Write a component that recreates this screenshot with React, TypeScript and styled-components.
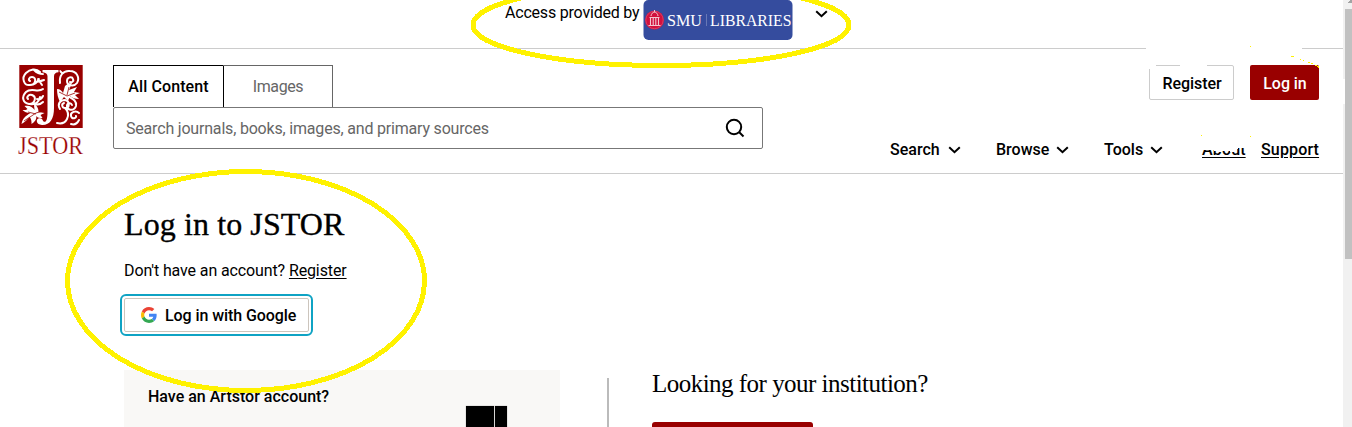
import React from "react";
import styled, { createGlobalStyle, css } from "styled-components";

const Global = createGlobalStyle`
  * { box-sizing: border-box; }
  html, body { margin: 0; height: 100%; overflow: hidden; background: #fff; }
  body { font-family: Roboto, "Liberation Sans", sans-serif; font-size: 16px; color: #000; }
  h1, h2, h3, p { margin: 0; font-weight: 400; }
  svg { display: block; flex: none; }
`;

const Window = styled.div`
  position: relative;
  display: flex;
  width: 1352px;
  height: 427px;
  overflow: hidden;
`;
const Page = styled.div`
  width: 1343px;
  flex: none;
`;
const AccessBar = styled.div`
  display: flex;
  align-items: flex-start;
  height: 49px;
  padding-left: 505px;
  border-bottom: 1px solid #ccc;
`;
const AccessText = styled.span`
  width: 138px;
  line-height: 26px;
  white-space: nowrap;
  letter-spacing: -0.2px;
`;
const Header = styled.header`
  display: flex;
  height: 125px;
  padding: 16px 24px 0 18px;
  border-bottom: 1px solid #ccc;
`;
const LogoColumn = styled.div`
  width: 95px;
  flex: none;
`;
const SearchColumn = styled.div`
  width: 650px;
  flex: none;
`;
const Tabs = styled.div`
  display: flex;
  height: 42px;
`;
const Tab = styled.div<{ $active?: boolean }>`
  width: 110px;
  line-height: 42px;
  text-align: center;
  border: 1px solid #666;
  border-width: 1px 1px 0 0;
  color: #666;
  letter-spacing: -0.4px;
  text-indent: 1px;
  ${(p) =>
    p.$active &&
    css`
      border-color: #000;
      border-left-width: 1px;
      width: 111px;
      margin-right: -1px;
      color: #000;
      font-weight: 500;
      letter-spacing: 0.09px;
      text-indent: 0;
    `}
`;
const SearchBox = styled.div`
  display: flex;
  align-items: center;
  justify-content: space-between;
  height: 42px;
  padding: 0 17px 0 12px;
  border: 1px solid #777;
  border-radius: 2px;
  color: #666;
  letter-spacing: -0.19px;
`;
const Side = styled.div`
  flex: 1;
  display: flex;
  flex-direction: column;
  align-items: flex-end;
  justify-content: space-between;
  height: 95px;
`;
const Buttons = styled.div`
  display: flex;
  gap: 16px;
`;
const Button = styled.div<{ $primary?: boolean }>`
  width: ${(p) => (p.$primary ? 69 : 85)}px;
  height: 35px;
  padding-left: 1px;
  line-height: ${(p) => (p.$primary ? 37 : 35)}px;
  text-align: center;
  font-weight: 500;
  letter-spacing: -0.05px;
  border-radius: 2px;
  border: ${(p) => (p.$primary ? "0" : "1px solid #ccc")};
  background: ${(p) => (p.$primary ? "#900" : "#fff")};
  color: ${(p) => (p.$primary ? "#fff" : "#000")};
`;
const Nav = styled.nav`
  display: flex;
  font-weight: 500;
  line-height: 20px;
`;
const NavItem = styled.span<{ $width: number; $textWidth: number }>`
  display: flex;
  align-items: center;
  width: ${(p) => p.$width}px;
  & > span {
    width: ${(p) => p.$textWidth}px;
  }
`;
const NavLink = styled.span<{ $width: number }>`
  width: ${(p) => p.$width}px;
  letter-spacing: 0.15px;
  text-decoration: underline;
  text-underline-offset: 2px;
`;
const Main = styled.main`
  padding: 30px 0 0 124px;
`;
const Title = styled.h1`
  font-family: "Liberation Serif", serif;
  font-size: 32px;
  line-height: 40px;
  letter-spacing: 0.1px;
  -webkit-text-stroke: 0.35px #000;
`;
const Account = styled.p`
  margin-top: 17px;
  line-height: 20px;
  letter-spacing: -0.12px;
  a { text-decoration: underline; text-underline-offset: 2px; }
`;
const GoogleButton = styled.div`
  display: flex;
  align-items: center;
  gap: 8px;
  width: 185px;
  height: 34px;
  margin-top: 17px;
  padding-left: 16px;
  border: 1px solid #ccc5bd;
  border-radius: 2px;
  outline: 2px solid #0fa3c4;
  outline-offset: 2px;
  font-weight: 500;
  letter-spacing: -0.08px;
`;
const Columns = styled.div`
  display: flex;
  align-items: flex-start;
  margin-top: 38px;
`;
const ArtstorCard = styled.section`
  display: flex;
  justify-content: space-between;
  width: 436px;
  height: 57px;
  padding: 0 53px 0 24px;
  background: #f9f8f6;
`;
const CardTitle = styled.h3`
  font-size: 16px;
  font-weight: 500;
  line-height: 20px;
  padding-top: 17px;
`;
const ArtstorMark = styled.div`
  display: flex;
  gap: 1px;
  padding-top: 36px;
`;
const MarkBlock = styled.i<{ $width: number }>`
  width: ${(p) => p.$width}px;
  background: #000;
  box-shadow: 0 0 1px #888;
`;
const Separator = styled.div`
  width: 2px;
  height: 49px;
  margin: 8px 43px 0 47px;
  background: #bbb;
`;
const Institution = styled.section`
  height: 57px;
`;
const InstitutionTitle = styled.h2`
  height: 52px;
  font-family: "Liberation Serif", serif;
  font-size: 25px;
  line-height: 28px;
  letter-spacing: -0.52px;
`;
const InstitutionButton = styled.div`
  width: 161px;
  height: 20px;
  border-radius: 3px;
  background: #900;
`;
const Scrollbar = styled.div`
  width: 9px;
  padding: 9px 0 0 2px;
  background: #f1f1f1;
`;
const Thumb = styled.div`
  height: 250px;
  background: #c1c1c1;
`;
const Annotations = styled.svg`
  position: absolute;
  inset: 0;
`;

const Chevron = () => (
  <svg width="13" height="8" viewBox="0 0 13 8" fill="none" stroke="#000" strokeWidth="2">
    <path d="M1.2 1.2 6.5 6.2l5.3-5" />
  </svg>
);

const SmuLogo = () => (
  <svg width="150" height="40" viewBox="0 0 150 40">
    <rect x=".5" width="149" height="40" rx="5" fill="#354c9e" />
    <circle cx="11.500" cy="20" r="9.500" fill="#d2103e" />
    <circle cx="11.500" cy="20" r="8.700" fill="none" stroke="#e26a85" strokeWidth=".5" />
    <g stroke="#f3c6d0" fill="none">
      <path d="M6.500 17.500h10M5.500 25.500h12" />
      <path d="M7.500 18v7M10.200 18v7M12.800 18v7M15.500 18v7" strokeWidth="1.100" />
      <path d="M8 16c.5-5 6.500-5 7 0M11.500 12v-2" />
    </g>
    <g fill="#fff" fontFamily="Liberation Serif, serif" fontSize="17.500">
      <text x="24" y="25.800" textLength="35" lengthAdjust="spacingAndGlyphs">SMU</text>
      <text x="67" y="25.800" textLength="81.500" lengthAdjust="spacingAndGlyphs">LIBRARIES</text>
    </g>
    <path d="M63.500 14v12" stroke="#7c8bc2" strokeWidth=".7" />
  </svg>
);

const JstorLogo = () => (
  <svg width="68" height="92" viewBox="0 0 68 92">
    <rect x="1.300" width="63.400" height="63" fill="#900" />
    <g fill="none" stroke="#fff" strokeWidth="2" strokeLinecap="round">
      <path d="M22 7C18 3 12 4 8 8c-5 5-2 13 4 12 6 0 7-8 2-8-3 0-4 3-2 4M12 20c5 0 7-3 9-6M16 5c3 3 6 4 9 4M17 17c3 0 6-1 9-2M20 14l4 6" />
      <path d="M25 24c-5 4-12-2-17 3-5 5-3 11 3 12 6 0 8-7 3-9-3-1-6 2-4 4M12 39c6 1 9-3 10-7M19 34c3 1 5-1 6-3M17 39c3 1 6 0 8-2" />
      <path d="M42 18c-1-7 3-13 10-12 7 0 10 7 7 12-3 4-10 3-10-2 0-4 5-5 6-2 1 2-1 4-3 3M44 8l-2-2" />
      <path d="M50 31c5 3 9 5 8 10-2 6-10 4-9 0 0-3 4-4 5-1M42 44c-3-5 0-9 5-9 5 1 5 8 0 8-3 0-4-4-1-5M47 43c4 4 4 7 2 11-2 4-6 5-10 4M61 48c-3-3-9-1-8 3 1 4 6 2 5 0M61 55c-2 4-5 5-8 4" />
    </g>
    <path d="M23.500 4h18v4.500q-4 .5-4 4V42c0 12-4 19-15 18l4-8c2-1 2-3 2-9V12q0-4-5-4z" fill="#900" />
    <g fill="#fff">
      <path d="M24.500 5h16v2.200q-4.500.3-4.500 4V43c0 11-4 17.300-12 17-6-.3-6.500-6-3-6.700 3-.5 3.500 1.500 4.500 3.200 2.500 1.500 4-1.500 4-9.500V11.200q0-3.500-5-4z" />
      <path d="M3.500 59c1-6 4-8 9-11-4 0-6-1-8-3 3 0 4 0 5-1l-3-3c5-1 8 1 10 4 0-3-1-4 0-6 3 2 4 5 4 8l6 1-4 2 2 3c-3 0-5 0-6-2 0 4-2 6-5 8 0-3 0-5-2-7-2 2-4 5-8 7z" />
      <path d="M39 24c3 0 5 2 6 4l2-7c2-2 4-3 7-3l-3 7 8-3-3 5 6 1-5 2 4 4c-4 0-7-1-9-3l-2 5-4-4-4 5c-2-4-3-8-3-13z" />
    </g>
    <g stroke="#900" strokeWidth=".8" fill="none">
      <path d="M6 56 18 48l7-2M10 47l8 2M41 27l8 4 8-3M49 30l2-8" />
    </g>
    <text x="0" y="88.500" fill="#900" stroke="#fff" strokeWidth=".25" fontFamily="Liberation Serif, serif" fontSize="25" textLength="65" lengthAdjust="spacingAndGlyphs">JSTOR</text>
  </svg>
);

const SearchIcon = () => (
  <svg width="20" height="20" viewBox="0 0 20 20" fill="none" stroke="#000" strokeWidth="2">
    <circle cx="9" cy="9" r="7.200" />
    <path d="m14 14 4.500 4.500" />
  </svg>
);

const GoogleIcon = () => (
  <svg width="16" height="16" viewBox="0 0 48 48">
    <path fill="#EA4335" d="M24 9.500c3.540 0 6.710 1.220 9.210 3.600l6.850-6.850C35.900 2.380 30.470 0 24 0 14.620 0 6.510 5.380 2.560 13.220l7.980 6.190C12.430 13.720 17.740 9.500 24 9.500z" />
    <path fill="#4285F4" d="M46.980 24.550c0-1.570-.15-3.090-.38-4.550H24v9.020h12.940c-.58 2.960-2.260 5.480-4.780 7.180l7.730 6c4.510-4.180 7.090-10.360 7.090-17.650z" />
    <path fill="#FBBC05" d="M10.530 28.590c-.48-1.450-.76-2.990-.76-4.590s.27-3.140.76-4.590l-7.980-6.190C.92 16.460 0 20.120 0 24c0 3.880.92 7.540 2.560 10.780l7.970-6.190z" />
    <path fill="#34A853" d="M24 48c6.480 0 11.930-2.130 15.890-5.810l-7.730-6c-2.150 1.450-4.920 2.300-8.160 2.300-6.260 0-11.570-4.220-13.470-9.910l-7.980 6.190C6.510 42.620 14.620 48 24 48z" />
  </svg>
);

const AccessChevron = styled.span`
  padding: 10px 0 0 21.5px;
`;

export default function App() {
  return (
    <Window>
      <Global />
      <Page>
        <AccessBar>
          <AccessText>Access provided by</AccessText>
          <SmuLogo />
          <AccessChevron><Chevron /></AccessChevron>
        </AccessBar>
        <Header>
          <LogoColumn><JstorLogo /></LogoColumn>
          <SearchColumn>
            <Tabs>
              <Tab $active>All Content</Tab>
              <Tab>Images</Tab>
            </Tabs>
            <SearchBox>
              Search journals, books, images, and primary sources
              <SearchIcon />
            </SearchBox>
          </SearchColumn>
          <Side>
            <Buttons>
              <Button>Register</Button>
              <Button $primary>Log in</Button>
            </Buttons>
            <Nav>
              <NavItem $width={106} $textWidth={58}><span>Search</span><Chevron /></NavItem>
              <NavItem $width={108} $textWidth={60}><span>Browse</span><Chevron /></NavItem>
              <NavItem $width={98} $textWidth={46}><span>Tools</span><Chevron /></NavItem>
              <NavLink $width={59}>About</NavLink>
              <NavLink $width={58}>Support</NavLink>
            </Nav>
          </Side>
        </Header>
        <Main>
          <Title>Log in to JSTOR</Title>
          <Account>Don't have an account? <a>Register</a></Account>
          <GoogleButton><GoogleIcon />Log in with Google</GoogleButton>
          <Columns>
            <ArtstorCard>
              <CardTitle>Have an Artstor account?</CardTitle>
              <ArtstorMark>
                <MarkBlock $width={28} />
                <MarkBlock $width={12} />
              </ArtstorMark>
            </ArtstorCard>
            <Separator />
            <Institution>
              <InstitutionTitle>Looking for your institution?</InstitutionTitle>
              <InstitutionButton />
            </Institution>
          </Columns>
        </Main>
      </Page>
      <Scrollbar><Thumb /></Scrollbar>
      <Annotations width="1352" height="427" shapeRendering="crispEdges">
        <g fill="none" stroke="#fff200" strokeWidth="5">
          <ellipse cx="661" cy="25" rx="188" ry="40.500" />
          <ellipse cx="246" cy="281" rx="178.500" ry="109.500" />
        </g>
        <g fill="#fff">
          <path d="M1146 46h156v5h-156zM1149 63h7v6h-8zM1180 63h27v4h-27zM1200 135h46v13l-8 0-4 4-8-1-8 1-6-2h-12z" />
          <path d="M1343 79h2v25h-2z" />
        </g>
        <path fill="#fff200" d="M1250 46h1v1h-1zM1291 56h3v1h-3zM1300 59h1v1h-1zM1303 60h1v1h-1zM1308 62h2v1h-2zM1311 63h2v1h-2zM1315 65h2v1h-2zM1317 66h2v2h-1v-1h-1zM1201 135h1v1h-1zM1250 136h1v1h-1z" />
        <path fill="#a3a3a3" d="M1350 0h2v3h-4v-1h1v-1h1z" />
      </Annotations>
    </Window>
  );
}
